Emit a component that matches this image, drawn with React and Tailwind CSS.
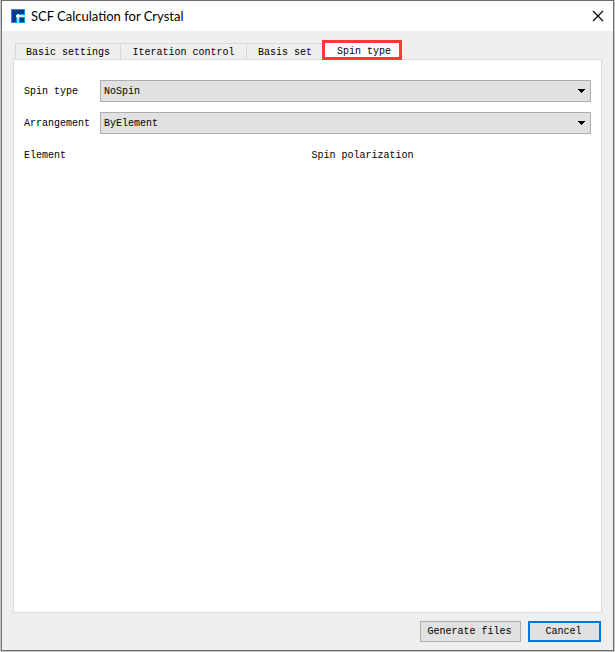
import React, { useState } from 'react';

const TABS = [
  { name: 'Basic settings', width: 'w-[105px]' },
  { name: 'Iteration control', width: 'w-[126px]' },
  { name: 'Basis set', width: 'w-[77px]' },
];

const Logo = () => (
  <svg width="14" height="14" viewBox="0 0 14 14" shapeRendering="crispEdges" aria-hidden="true">
    <rect width="14" height="14" fill="#0a9bf5" />
    <path d="M1 1h12v4H7v1H5v7H1z" fill="#003c8c" />
    <path d="M9 9h4v4H9z" fill="#003c8c" />
    <path d="M5 6h1v8H5z" fill="#0a9bf5" />
    <path d="M6 8h2v6H6z" fill="#8fd3ff" />
    <path d="M8 6h6v2H8z" fill="#c4e8ff" />
    <path d="M6 5h2v1h1v2H8v1H6V8H5V6h1z" fill="#fff" />
  </svg>
);

const SelectRow = ({ id, label, value, onChange, options }) => (
  <div className="flex items-center">
    <label htmlFor={id} className="w-[76px] shrink-0 pt-[2px]">{label}</label>
    <div className="relative flex-1">
      <select
        id={id}
        value={value}
        onChange={(e) => onChange(e.target.value)}
        className="block h-[22px] w-full appearance-none border border-[#adadad] bg-[#e1e1e1] pl-[3px] pr-5 pt-[2px] outline-none"
      >
        {options.map((o) => (
          <option key={o}>{o}</option>
        ))}
      </select>
      <svg
        className="pointer-events-none absolute right-[6px] top-[9px]"
        width="7"
        height="4"
        viewBox="0 0 7 4"
        shapeRendering="crispEdges"
        aria-hidden="true"
      >
        <path d="M0 0h7v1H6v1H5v1H4v1H3V3H2V2H1V1H0z" />
      </svg>
    </div>
  </div>
);

const App = () => {
  const [spinType, setSpinType] = useState('NoSpin');
  const [arrangement, setArrangement] = useState('ByElement');

  return (
    <div className="flex min-h-screen flex-col bg-[#c8c8c8] px-px pb-px font-['Liberation_Mono',monospace] text-[10px] leading-[14px] text-black">
      <div className="flex flex-1 flex-col border border-[#6e6e6e] bg-[#efefef]">
        {/* Title bar */}
        <header className="flex h-[30px] items-center bg-white px-[9px]">
          <Logo />
          <h1 className="ml-[6px] flex-1 font-['Lato',sans-serif] text-[13px]">SCF Calculation for Crystal</h1>
          <button type="button" aria-label="Close">
            <svg width="12" height="12" viewBox="0 0 12 12" stroke="#000" strokeWidth="1.1" fill="none">
              <path d="M1 1l10 10M11 1L1 11" />
            </svg>
          </button>
        </header>

        <main className="flex flex-1 flex-col px-[11px]">
          {/* Tabs */}
          <div role="tablist" className="flex h-[28px] items-end pl-[2px]">
            {TABS.map((tab) => (
              <button
                key={tab.name}
                type="button"
                role="tab"
                aria-selected="false"
                className={`${tab.width} h-4 border-l border-t border-[#d9d9d9] pt-[2px]`}
              >
                {tab.name}
              </button>
            ))}
            <button
              type="button"
              role="tab"
              aria-selected="true"
              className="z-10 -mb-px -ml-px h-5 w-20 border-[3px] border-[#ff3737] bg-white pl-1 pt-[2px]"
            >
              Spin type
            </button>
          </div>

          <section role="tabpanel" className="flex flex-1 flex-col gap-[10px] border border-[#dcdcdc] bg-white px-[10px] pt-5">
            <SelectRow
              id="spin-type"
              label="Spin type"
              value={spinType}
              onChange={setSpinType}
              options={['NoSpin', 'Collinear', 'Noncollinear']}
            />
            <SelectRow
              id="arrangement"
              label="Arrangement"
              value={arrangement}
              onChange={setArrangement}
              options={['ByElement', 'ByAtom']}
            />
            <table className="w-full table-fixed text-left">
              <thead>
                <tr className="h-6">
                  <th className="w-1/2 font-normal">Element</th>
                  <th className="w-1/2 pl-1 font-normal">Spin polarization</th>
                </tr>
              </thead>
            </table>
          </section>
        </main>

        <footer className="flex justify-end gap-[7px] px-3 py-2">
          <button type="button" className="h-[21px] w-[101px] border border-[#adadad] bg-[#e1e1e1] pr-[2px]">
            Generate files
          </button>
          <button type="button" className="h-[21px] w-[73px] border-2 border-[#0078d7] bg-[#e1e1e1] pr-[2px]">
            Cancel
          </button>
        </footer>
      </div>
    </div>
  );
};

export default App;
